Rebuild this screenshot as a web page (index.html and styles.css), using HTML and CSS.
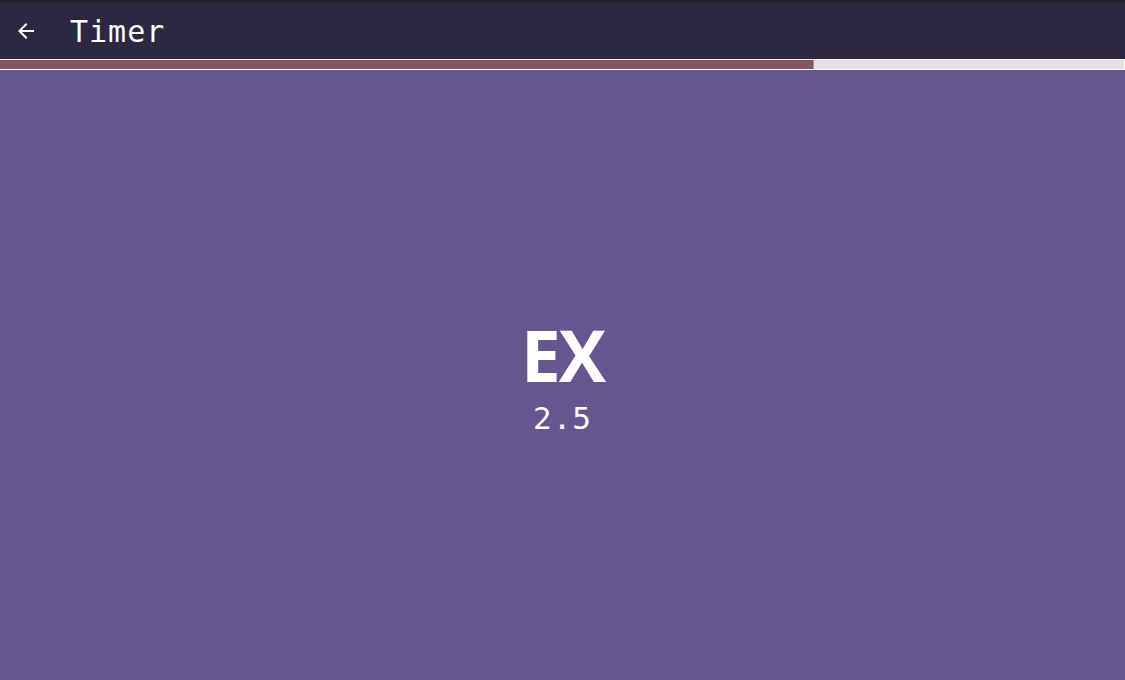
FILE: index.html
```html
<!DOCTYPE html>
<html>
<head>
<meta charset="utf-8">
<link rel="stylesheet" href="styles.css">
</head>
<body>
<div class="app">
  <div class="topstrip"></div>
  <header class="bar">
    <button class="back" aria-label="Back">
      <svg width="24" height="24" viewBox="0 0 24 24"><path d="M20 11H7.83l5.59-5.59L12 4l-8 8 8 8 1.41-1.41L7.83 13H20v-2z" fill="#ffffff"/></svg>
    </button>
    <h1 class="title">Timer</h1>
  </header>
  <div class="progress"><div class="fill" style="width:72.3%"></div></div>
  <main class="stage">
    <div class="label">EX</div>
    <div class="value">2.5</div>
  </main>
</div>
</body>
</html>
```
FILE: styles.css
```css
html, body { margin: 0; padding: 0; }
body { background: #655690; width: 1125px; height: 680px; overflow: hidden; }
.app { display: flex; flex-direction: column; height: 680px; }
.topstrip { height: 3px; background: #1f2028; }
.bar { height: 56px; background: #2d2741; display: flex; align-items: center; box-sizing: border-box; padding-left: 14px; }
.back { width: 24px; height: 24px; padding: 0; border: 0; background: none; display: flex; margin-top: 0; }
.title { margin: 0 0 0 32px; font-family: "DejaVu Sans Mono", monospace; font-weight: 400; font-size: 30px; color: #ffffff; letter-spacing: 1px; }
.progress { height: 9px; border-top: 1px solid #ffffff; border-bottom: 1px solid #ffffff; border-right: 1px solid #ffffff; background: #e5e0e8; display: flex; }
.fill { background: #84545f; border-right: 1px solid #b08c97; height: 100%; }
.stage { flex: 1; display: flex; flex-direction: column; align-items: center; justify-content: center; padding-top: 3px; }
.label { font-family: "Open Sans", sans-serif; font-weight: 700; font-size: 71px; line-height: 76px; color: #ffffff; letter-spacing: -2px; }
.value { margin-top: 7px; font-family: "DejaVu Sans Mono", monospace; font-size: 31px; line-height: 36px; color: #ffffff; letter-spacing: 1px; }
```
